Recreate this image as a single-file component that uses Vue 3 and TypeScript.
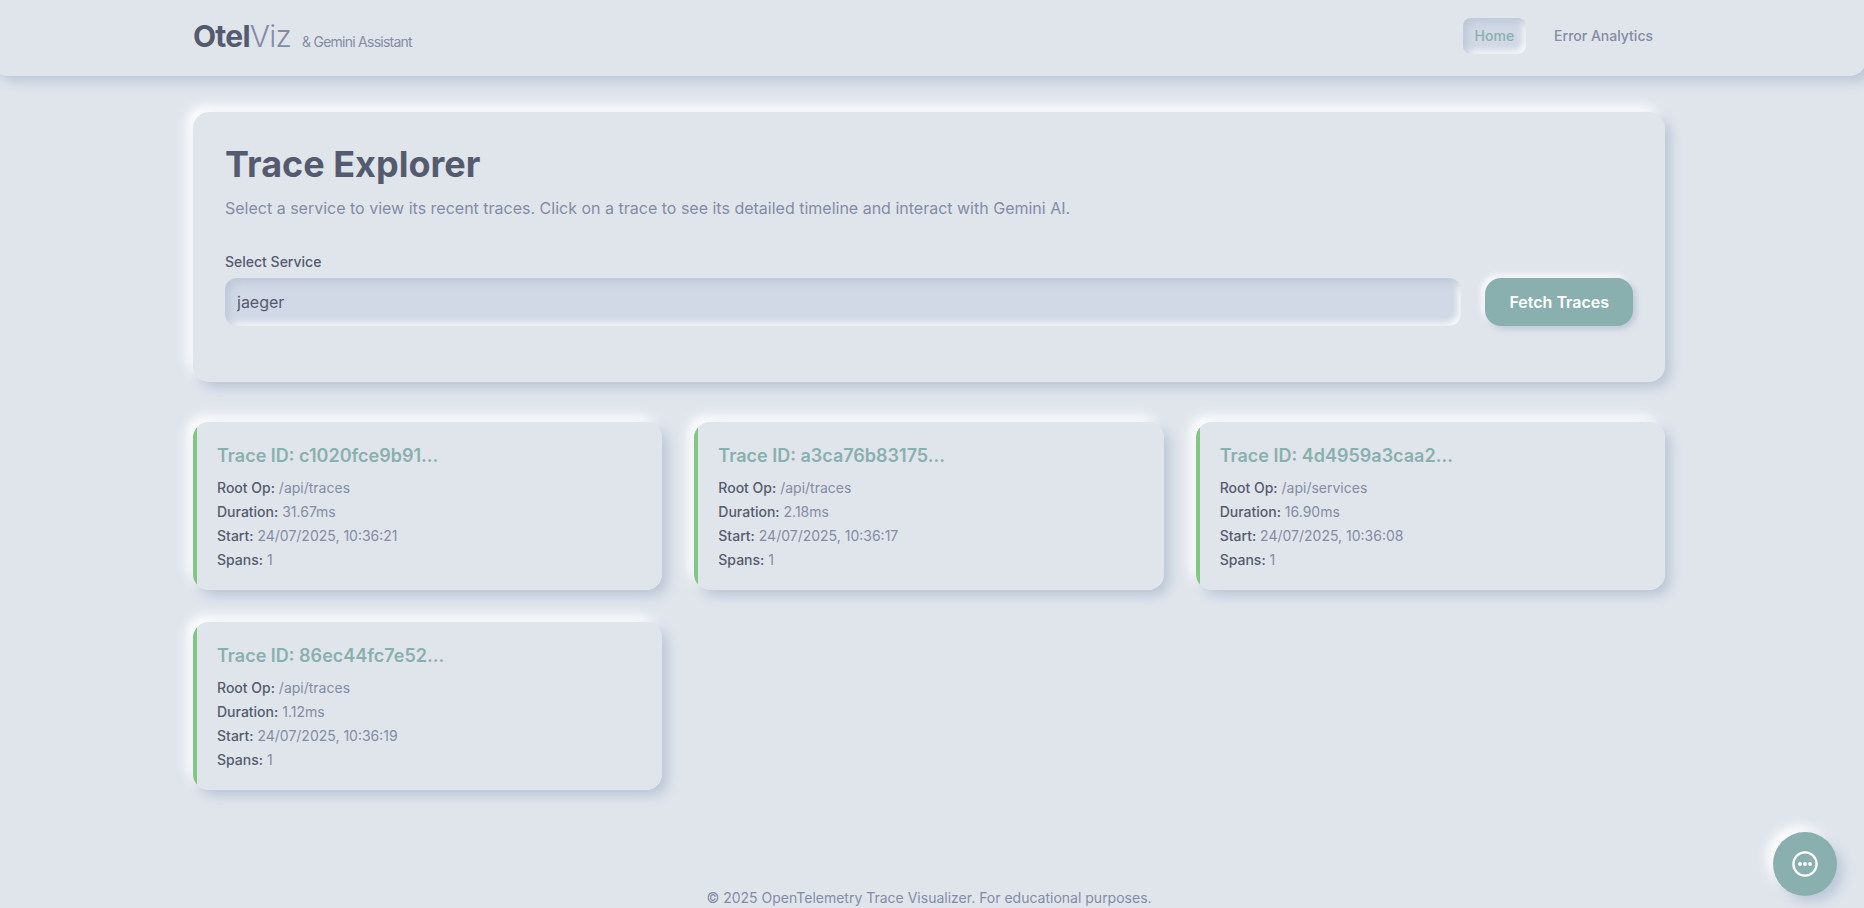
<script setup lang="ts">
import { ref } from 'vue'

interface Trace {
  id: string
  rootOp: string
  duration: string
  start: string
  spans: number
}

const service = ref('jaeger')
const services: string[] = ['jaeger']

const traces: Trace[] = [
  { id: 'c1020fce9b91', rootOp: '/api/traces', duration: '31.67ms', start: '24/07/2025, 10:36:21', spans: 1 },
  { id: 'a3ca76b83175', rootOp: '/api/traces', duration: '2.18ms', start: '24/07/2025, 10:36:17', spans: 1 },
  { id: '4d4959a3caa2', rootOp: '/api/services', duration: '16.90ms', start: '24/07/2025, 10:36:08', spans: 1 },
  { id: '86ec44fc7e52', rootOp: '/api/traces', duration: '1.12ms', start: '24/07/2025, 10:36:19', spans: 1 },
]
</script>

<template>
  <div class="page">
    <header class="topbar">
      <div class="container topbar-row">
        <a class="brand" href="#"><strong>Otel</strong><span class="brand-light">Viz</span><span class="brand-sub">&amp; Gemini Assistant</span></a>
        <nav class="nav" aria-label="Main">
          <a class="nav-link active" href="#home">Home</a>
          <a class="nav-link" href="#errors">Error Analytics</a>
        </nav>
      </div>
    </header>

    <main class="container content">
      <section class="panel explorer">
        <h1>Trace Explorer</h1>
        <p class="intro">Select a service to view its recent traces. Click on a trace to see its detailed timeline and interact with Gemini AI.</p>
        <form class="picker" @submit.prevent>
          <div class="field">
            <label for="service">Select Service</label>
            <select id="service" v-model="service">
              <option v-for="s in services" :key="s" :value="s">{{ s }}</option>
            </select>
          </div>
          <button class="fetch" type="submit">Fetch Traces</button>
        </form>
      </section>

      <section class="grid" aria-label="Traces">
        <article v-for="t in traces" :key="t.id" class="panel card">
          <h2>Trace ID: {{ t.id }}...</h2>
          <p><b>Root Op:</b> {{ t.rootOp }}</p>
          <p><b>Duration:</b> {{ t.duration }}</p>
          <p><b>Start:</b> {{ t.start }}</p>
          <p><b>Spans:</b> {{ t.spans }}</p>
        </article>
      </section>
    </main>

    <footer class="footer">© 2025 OpenTelemetry Trace Visualizer. For educational purposes.</footer>

    <button class="chat" type="button" aria-label="Open chat">
      <svg viewBox="0 0 32 32" width="32" height="32" aria-hidden="true">
        <circle cx="16" cy="16" r="11.6" fill="none" stroke="#fff" stroke-width="2.3" />
        <circle cx="11" cy="16" r="1.9" fill="#fff" />
        <circle cx="16" cy="16" r="1.9" fill="#fff" />
        <circle cx="21" cy="16" r="1.9" fill="#fff" />
      </svg>
    </button>
  </div>
</template>

<style>
body {
  margin: 0;
  background: #e0e5ec;
}
</style>

<style scoped>
.page {
  --ink: #555b6e;
  --muted: #838ca5;
  --accent: #89b0ae;
  --surface: #e0e5ec;
  --well: #d1d9e6;
  --dark: #bcc7d7;
  --raised: 6px 6px 12px var(--dark), -6px -6px 12px #fff;
  --sunken: inset 4px 4px 8px var(--dark), inset -3px -3px 6px #fff;
  display: flex;
  flex-direction: column;
  min-height: 100vh;
  padding-right: 6px;
  box-sizing: border-box;
  overflow-x: clip;
  background: var(--surface);
  color: var(--ink);
  font-family: Inter, "Liberation Sans", sans-serif;
  font-size: 16px;
  line-height: 24px;
}

.container {
  width: 100%;
  max-width: 1536px;
  margin: 0 auto;
  padding: 0 32px;
  box-sizing: border-box;
}

.topbar {
  margin: 0 -8px;
  padding: 16px 8px 20px;
  background: var(--surface);
  border-radius: 0 0 16px 16px;
  box-shadow: var(--raised);
}

.topbar-row {
  display: flex;
  align-items: center;
  justify-content: space-between;
}

.brand {
  display: flex;
  align-items: baseline;
  color: var(--ink);
  font-size: 30px;
  line-height: 40px;
  letter-spacing: -0.025em;
  text-decoration: none;
}

.brand-light {
  color: var(--muted);
  font-weight: 300;
}

.brand-sub {
  margin-left: 11px;
  color: var(--muted);
  font-size: 14px;
  line-height: 20px;
}

.nav {
  display: flex;
  gap: 16px;
}

.nav-link {
  padding: 8px 12px;
  border-radius: 8px;
  color: var(--muted);
  font-size: 14px;
  font-weight: 500;
  line-height: 20px;
  text-decoration: none;
}

.nav-link.active {
  background: var(--well);
  box-shadow: var(--sunken);
  color: var(--accent);
}

.content {
  padding-top: 36px;
}

.panel {
  border-radius: 16px;
  background: var(--surface);
  box-shadow: var(--raised);
}

.explorer {
  padding: 32px 32px 56px;
}

h1 {
  margin: 0 0 12px;
  font-size: 36px;
  font-weight: 700;
  line-height: 40px;
}

.intro {
  margin: 0 0 32px;
  color: var(--muted);
}

.picker {
  display: flex;
  align-items: flex-end;
  gap: 24px;
}

.field {
  flex: 1;
}

label {
  display: block;
  margin-bottom: 6px;
  font-size: 14px;
  font-weight: 500;
  line-height: 20px;
}

select {
  display: block;
  width: 100%;
  height: 48px;
  padding: 0 12px;
  border: 0;
  border-radius: 12px;
  appearance: none;
  background: var(--well);
  box-shadow: var(--sunken);
  color: var(--ink);
  font: inherit;
}

.fetch {
  height: 48px;
  padding: 0 24px;
  border: 0;
  border-radius: 16px;
  background: var(--accent);
  box-shadow: 3px 3px 6px var(--dark), -3px -3px 6px #fff;
  color: #fff;
  font: inherit;
  font-weight: 600;
}

.grid {
  display: grid;
  grid-template-columns: repeat(3, minmax(0, 1fr));
  gap: 32px;
  margin-top: 40px;
}

.card {
  padding: 20px 20px 20px 24px;
  background: linear-gradient(to right, #81c784 4px, var(--surface) 4px);
}

.card h2 {
  margin: 0 0 8px;
  color: var(--accent);
  font-size: 18px;
  font-weight: 600;
  line-height: 28px;
}

.card p {
  margin: 0 0 4px;
  color: var(--muted);
  font-size: 14px;
  line-height: 20px;
}

.card p:last-child {
  margin-bottom: 0;
}

.card b {
  color: var(--ink);
  font-weight: 500;
}

.footer {
  padding-top: 98px;
  color: var(--muted);
  font-size: 14px;
  line-height: 20px;
  text-align: center;
}

.chat {
  position: fixed;
  right: 27px;
  bottom: 12px;
  display: flex;
  align-items: center;
  justify-content: center;
  width: 64px;
  height: 64px;
  padding: 0;
  border: 0;
  border-radius: 50%;
  background: var(--accent);
  box-shadow: var(--raised);
}
</style>
